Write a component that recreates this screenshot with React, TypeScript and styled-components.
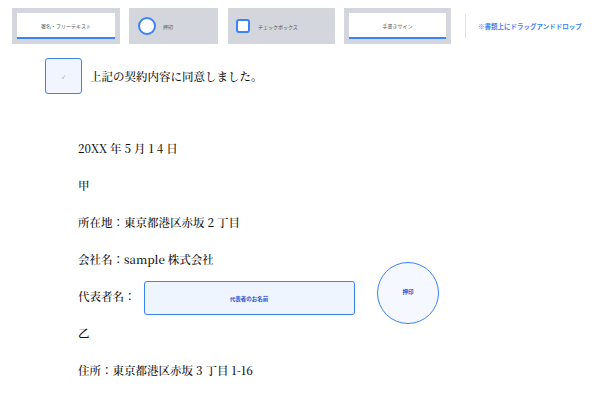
import React from "react";
import styled, { createGlobalStyle } from "styled-components";

const Global = createGlobalStyle`
  html, body { margin: 0; padding: 0; background: #fff; }
  body { width: 600px; height: 400px; overflow: hidden; }
`;

const SANS = `"Noto Sans CJK JP", "Noto Sans", sans-serif`;
const SERIF = `"Noto Serif CJK JP", "Liberation Serif", "Noto Sans CJK JP", serif`;
const BLUE = "#3b82f6";
const GRAY = "#d3d6dc";

const Page = styled.div`
  position: relative;
  width: 600px;
  height: 400px;
  overflow: hidden;
`;

const Toolbar = styled.div`
  display: flex;
  align-items: center;
  padding: 8px 0 0 12px;
  height: 36px;
`;

const Tool = styled.div<{ $w: number; $gap: number }>`
  box-sizing: border-box;
  width: ${(p) => p.$w}px;
  height: 36px;
  margin-right: ${(p) => p.$gap}px;
  background: ${GRAY};
  display: flex;
  align-items: center;
  padding: 5px;
  font-family: ${SANS};
  font-size: 5px;
  color: #555;
`;

const ActiveInner = styled.div`
  box-sizing: border-box;
  flex: 1;
  height: 100%;
  background: #fff;
  border-bottom: 2px solid ${BLUE};
  display: flex;
  align-items: center;
  justify-content: center;
`;

const IconTool = styled.div<{ $pl: number; $gap: number }>`
  display: flex;
  align-items: center;
  gap: ${(p) => p.$gap}px;
  padding-left: ${(p) => p.$pl}px;
`;

const CircleIcon = styled.div`
  box-sizing: border-box;
  width: 18px;
  height: 18px;
  border-radius: 50%;
  border: 2px solid ${BLUE};
  background: #fff;
`;

const SquareIcon = styled.div`
  box-sizing: border-box;
  width: 14px;
  height: 14px;
  border-radius: 3px;
  border: 2px solid ${BLUE};
  background: #fff;
`;

const Divider = styled.div`
  width: 1px;
  height: 24px;
  background: #dcdfe4;
  margin: 0 12px 0 14px;
`;

const Hint = styled.div`
  font-family: ${SANS};
  font-size: 6.5px;
  font-weight: 700;
  color: ${BLUE};
`;

const AgreeRow = styled.div`
  display: flex;
  align-items: center;
  gap: 8px;
  margin: 14px 0 0 45px;
`;

const CheckField = styled.div`
  box-sizing: border-box;
  width: 37px;
  height: 36px;
  border: 1.5px solid ${BLUE};
  border-radius: 3px;
  background: #f0f5ff;
  display: flex;
  align-items: center;
  justify-content: center;
  font-family: ${SANS};
  font-size: 5px;
  color: #6b8fd6;
`;

const SerifText = styled.div`
  font-family: ${SERIF};
  font-size: 11.5px;
  font-weight: 500;
  color: #111;
  white-space: pre;
`;

const Doc = styled.div`
  display: flex;
  flex-direction: column;
  gap: 21px;
  padding: 46px 0 0 78px;
`;

const Line = styled(SerifText)`
  height: 16px;
  line-height: 16px;
`;

const RepRow = styled.div`
  display: flex;
  align-items: center;
  height: 16px;
  gap: 8px;
`;

const NameField = styled.div`
  box-sizing: border-box;
  width: 211px;
  height: 34px;
  margin-top: 4px;
  border: 1.5px solid ${BLUE};
  border-radius: 3px;
  background: #eff5ff;
  display: flex;
  align-items: center;
  justify-content: center;
  font-family: ${SANS};
  font-size: 5.5px;
  font-weight: 700;
  color: #2750d0;
  padding-top: 2px;
`;

const Stamp = styled.div`
  position: absolute;
  left: 377px;
  top: 262px;
  box-sizing: border-box;
  width: 62px;
  height: 62px;
  border-radius: 50%;
  border: 1.5px solid ${BLUE};
  background: #f5f8ff;
  display: flex;
  align-items: center;
  justify-content: center;
  font-family: ${SANS};
  font-size: 5.5px;
  font-weight: 700;
  color: #2750d0;
  padding-bottom: 2px;
`;

export default function App() {
  return (
    <Page>
      <Global />
      <Toolbar>
        <Tool $w={108} $gap={9}>
          <ActiveInner>署名・フリーテキスト</ActiveInner>
        </Tool>
        <Tool $w={89} $gap={10}>
          <IconTool $pl={4} $gap={7}>
            <CircleIcon />
            <span>押印</span>
          </IconTool>
        </Tool>
        <Tool $w={107} $gap={9}>
          <IconTool $pl={3} $gap={8}>
            <SquareIcon />
            <span>チェックボックス</span>
          </IconTool>
        </Tool>
        <Tool $w={107} $gap={0}>
          <ActiveInner>手書きサイン</ActiveInner>
        </Tool>
        <Divider />
        <Hint>※書類上にドラッグアンドドロップ</Hint>
      </Toolbar>

      <AgreeRow>
        <CheckField>✓</CheckField>
        <SerifText>上記の契約内容に同意しました。</SerifText>
      </AgreeRow>

      <Doc>
        <Line>20XX 年 5 月 1 4 日</Line>
        <Line>甲</Line>
        <Line>所在地：東京都港区赤坂 2 丁目</Line>
        <Line>会社名：sample 株式会社</Line>
        <RepRow>
          <Line>代表者名：</Line>
          <NameField>代表者のお名前</NameField>
        </RepRow>
        <Line>乙</Line>
        <Line>住所：東京都港区赤坂 3 丁目 1-16</Line>
      </Doc>

      <Stamp>押印</Stamp>
    </Page>
  );
}
